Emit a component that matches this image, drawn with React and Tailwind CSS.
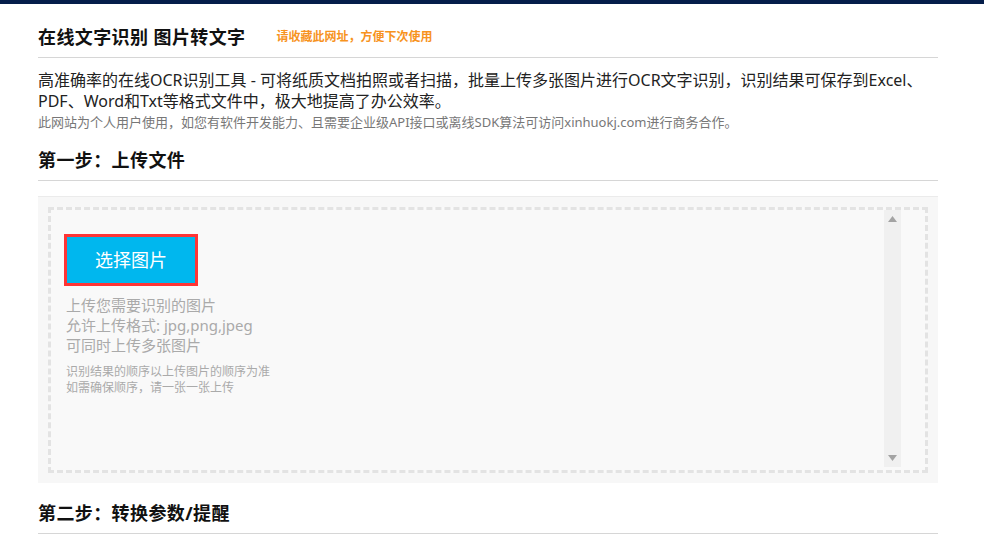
import React from "react";

const font = {
  fontFamily: '"Noto Sans", "Noto Sans CJK SC", sans-serif',
};

const Heading = ({ children, extra }) => (
  <div className="flex items-center border-b border-[#d6d6d6] pb-[7px]">
    <h2 className="text-[18px] leading-[26px] font-bold tracking-[0.4px] text-[#111]">{children}</h2>
    {extra}
  </div>
);

const FakeScrollbar = () => (
  <div className="w-[17px] bg-[#f0f0f0] flex flex-col items-center justify-between py-[6px]">
    <svg width="9" height="6" viewBox="0 0 9 6">
      <path d="M4.5 0 L9 6 L0 6 Z" fill="#a3a3a3" />
    </svg>
    <svg width="9" height="6" viewBox="0 0 9 6">
      <path d="M0 0 L9 0 L4.5 6 Z" fill="#a3a3a3" />
    </svg>
  </div>
);

export default function App() {
  return (
    <div className="min-h-screen bg-white" style={font}>
      <div className="h-[4px] bg-[#041d4a]" />
      <div className="w-[900px] ml-[38px] pt-[20px]">
        {/* title */}
        <Heading
          extra={
            <span className="ml-[31px] text-[12px] font-bold text-[#f7931e]">
              请收藏此网址，方便下次使用
            </span>
          }
        >
          在线文字识别 图片转文字
        </Heading>

        {/* intro */}
        <div className="mt-[12px] text-[16px] leading-[21px] text-[#222]">
          <p className="whitespace-nowrap">
            高准确率的在线OCR识别工具 - 可将纸质文档拍照或者扫描，批量上传多张图片进行OCR文字识别，识别结果可保存到Excel、
          </p>
          <p className="whitespace-nowrap">PDF、Word和Txt等格式文件中，极大地提高了办公效率。</p>
        </div>
        <p className="text-[13px] leading-[20px] text-[#777] whitespace-nowrap">
          此网站为个人用户使用，如您有软件开发能力、且需要企业级API接口或离线SDK算法可访问xinhuokj.com进行商务合作。
        </p>

        {/* step 1 */}
        <div className="mt-[15px]">
          <Heading>第一步：上传文件</Heading>
        </div>

        <div className="mt-[15px] bg-[#f7f7f7] border-t border-[#ebebeb] px-[10px] pt-[10px] pb-[10px]">
          <div className="h-[266px] border-[3px] border-dashed border-[#e3e3e3] bg-[#f9f9f9] flex pr-[24px] pb-[3px]">
            <div className="flex-1 pl-[13px] pt-[24px]">
              <button className="w-[134px] h-[52px] bg-[#00b7ee] border-[3px] border-[#ff3535] text-white text-[18px]">
                选择图片
              </button>
              <div className="mt-[9px] text-[15px] leading-[20px] text-[#aaa] pl-[2px]">
                <p>上传您需要识别的图片</p>
                <p>允许上传格式: jpg,png,jpeg</p>
                <p>可同时上传多张图片</p>
              </div>
              <div className="mt-[9px] text-[12px] leading-[16px] text-[#aaa] pl-[2px]">
                <p>识别结果的顺序以上传图片的顺序为准</p>
                <p>如需确保顺序，请一张一张上传</p>
              </div>
            </div>
            <FakeScrollbar />
          </div>
        </div>

        {/* step 2 */}
        <div className="mt-[17px]">
          <Heading>第二步：转换参数/提醒</Heading>
        </div>
      </div>
    </div>
  );
}
